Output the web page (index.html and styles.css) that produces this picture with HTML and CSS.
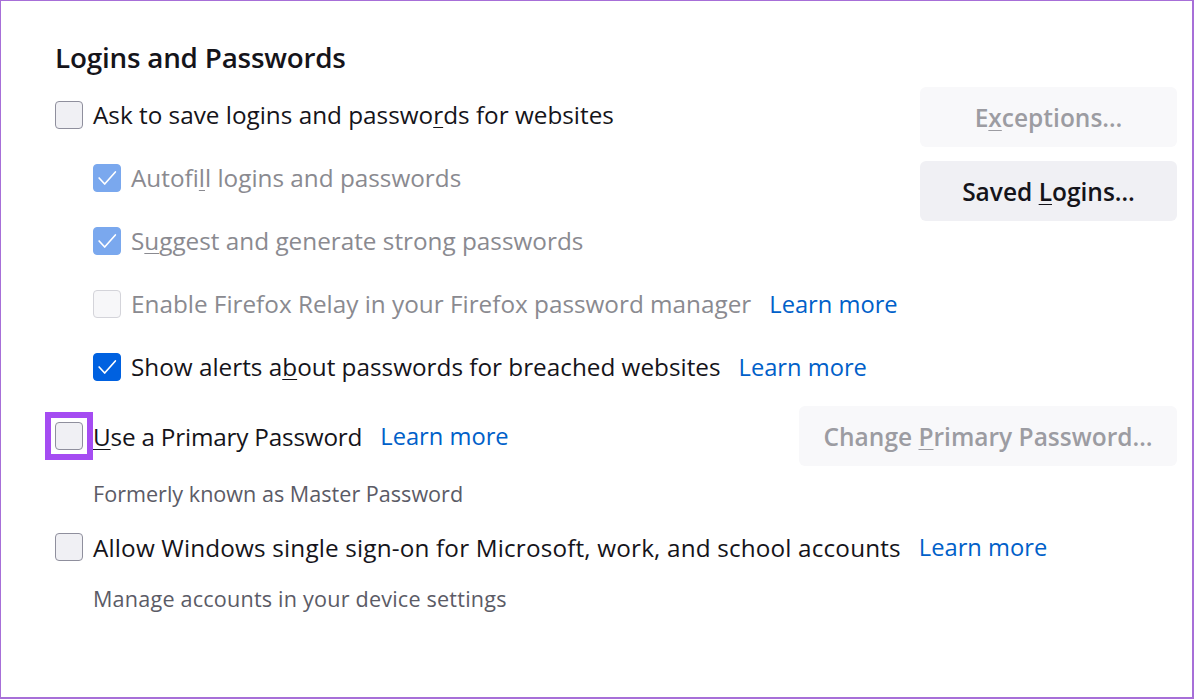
FILE: index.html
```html
<!DOCTYPE html>
<html lang="en">
<head>
<meta charset="utf-8">
<title>Logins and Passwords</title>
<link rel="stylesheet" href="styles.css">
</head>
<body>
<div class="frame">
  <h1 class="title">Logins and Passwords</h1>

  <div class="top">
    <div class="rows">
      <div class="row">
        <span class="box"></span>
        <span class="label">Ask to save logins and passwo<u>r</u>ds for websites</span>
      </div>
      <div class="row sub">
        <span class="box checked dim"><svg viewBox="0 0 28 28"><path d="M5.5 14 L11.5 20.5 L23 7.5"/></svg></span>
        <span class="label dis">Autofi<u>l</u>l logins and passwords</span>
      </div>
      <div class="row sub">
        <span class="box checked dim"><svg viewBox="0 0 28 28"><path d="M5.5 14 L11.5 20.5 L23 7.5"/></svg></span>
        <span class="label dis">S<u>u</u>ggest and generate strong passwords</span>
      </div>
      <div class="row sub">
        <span class="box off"></span>
        <span class="label dis">Enable Firefox Relay in your Firefox password manager</span>
        <a class="link">Learn more</a>
      </div>
      <div class="row sub">
        <span class="box checked"><svg viewBox="0 0 28 28"><path d="M5.5 14 L11.5 20.5 L23 7.5"/></svg></span>
        <span class="label">Show alerts a<u>b</u>out passwords for breached websites</span>
        <a class="link">Learn more</a>
      </div>
    </div>
    <div class="buttons">
      <button class="btn disabled">E<u>x</u>ceptions…</button>
      <button class="btn">Saved <u>L</u>ogins…</button>
    </div>
  </div>

  <div class="primary">
    <div class="row">
      <span class="box highlight"></span>
      <span class="label tight"><u>U</u>se a Primary Password</span>
      <a class="link">Learn more</a>
    </div>
    <button class="btn disabled wide">Change <u>P</u>rimary Password…</button>
  </div>
  <p class="note">Formerly known as Master Password</p>

  <div class="row sso">
    <span class="box"></span>
    <span class="label wide-text">Allow Windows single sign-on for Microsoft, work, and school accounts</span>
    <a class="link">Learn more</a>
  </div>
  <p class="note note2">Manage accounts in your device settings</p>
</div>
</body>
</html>
```

FILE: styles.css
```css
*, *::before, *::after { box-sizing: border-box; }

html, body {
  margin: 0;
  padding: 0;
  background: #ffffff;
}

body {
  font-family: "Open Sans", "Noto Sans", "Liberation Sans", sans-serif;
  color: #15141a;
}

.frame {
  width: 1194px;
  height: 699px;
  border: 1px solid #a76fd8;
  border-right-width: 2px;
  border-bottom-width: 2px;
  padding: 38px 15px 0 54px;
}

.title {
  margin: 0;
  font-size: 27.8px;
  font-weight: 600;
  line-height: 36px;
  height: 36px;
  letter-spacing: -0.2px;
}

.top {
  margin-top: 8px;
  display: flex;
  justify-content: space-between;
  align-items: flex-start;
}

.rows {
  display: flex;
  flex-direction: column;
}

.row {
  display: flex;
  align-items: center;
  height: 63px;
  font-size: 24.3px;
  white-space: nowrap;
}

.row.sub {
  padding-left: 38px;
}

.box {
  position: relative;
  width: 28px;
  height: 28px;
  flex: none;
  border: 1px solid #8f8f9d;
  border-radius: 4px;
  background: #f0f0f4;
  margin-right: 10px;
  display: flex;
  align-items: center;
  justify-content: center;
}

.box.off {
  border-color: #d4d4da;
  background: #f7f7f9;
}

.box.checked {
  background: #0061e0;
  border-color: #0061e0;
}

.box.checked.dim {
  background: #7aa8ee;
  border-color: #7aa8ee;
}

.box svg {
  width: 28px;
  height: 28px;
  fill: none;
  stroke: #ffffff;
  stroke-width: 1.8;
  stroke-linecap: round;
  stroke-linejoin: round;
}

.box.highlight::after {
  content: "";
  position: absolute;
  left: -11px;
  top: -11px;
  width: 48px;
  height: 48px;
  border: 6px solid #a54cf2;
}

.label u,
.btn u {
  text-decoration-thickness: 1px;
  text-underline-offset: 3px;
}

.label.dis {
  color: #8a8a90;
}

.label.tight {
  letter-spacing: -0.2px;
}

.label.wide-text {
  letter-spacing: 0.16px;
}

.link {
  margin-left: 18px;
  color: #0060c9;
  cursor: pointer;
  font-size: 23.7px;
}

.buttons {
  margin-top: 4px;
  display: flex;
  flex-direction: column;
  gap: 14px;
}

.btn {
  font-family: inherit;
  font-size: 24.5px;
  font-weight: 600;
  color: #15141a;
  background: #f0f0f4;
  border: none;
  border-radius: 6px;
  width: 257px;
  height: 60px;
  padding: 0;
}

.btn.disabled {
  background: #f8f8fa;
  color: #9c9ca2;
}

.btn.wide {
  width: 378px;
}

.primary {
  display: flex;
  justify-content: space-between;
  align-items: center;
  height: 76px;
}

.primary .row {
  height: 76px;
}

.note {
  margin: 5px 0 0 38px;
  height: 30px;
  line-height: 30px;
  font-size: 21.6px;
  color: #5b5b66;
}

.note2 {
  margin-top: 17px;
  letter-spacing: 0.2px;
}

.sso {
  margin-top: 18px;
  height: 40px;
}
```
